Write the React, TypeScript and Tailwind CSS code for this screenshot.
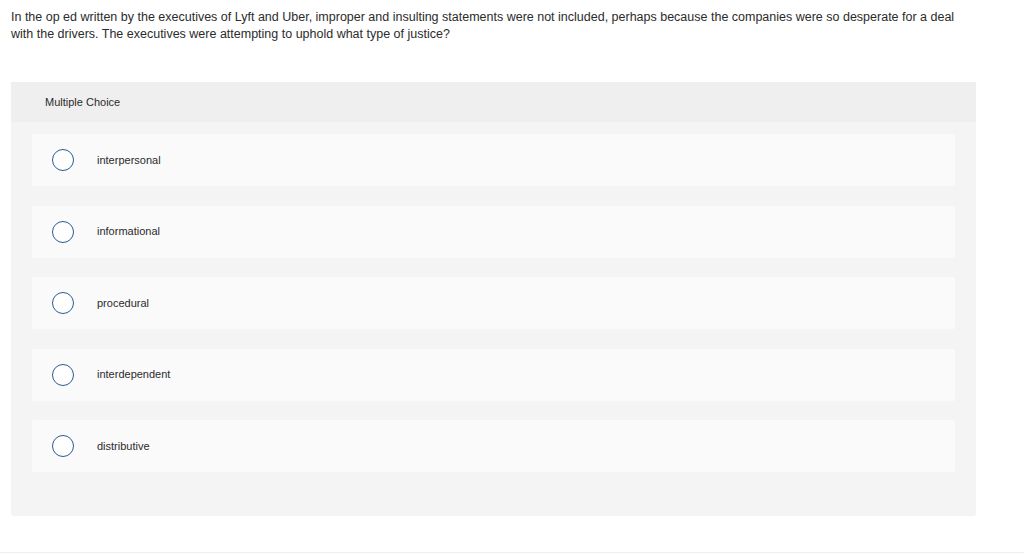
const OPTIONS = ["interpersonal", "informational", "procedural", "interdependent", "distributive"];

export default function App() {
  return (
    <div className="w-[1024px] h-[558px] bg-white font-['Liberation_Sans','Noto_Sans',sans-serif] flex flex-col">
      {/* Question */}
      <p className="pl-[11px] pt-[9px] w-[960px] text-[12.5px] leading-[17px] text-[#2b2b2b]">
        In the op ed written by the executives of Lyft and Uber, improper and insulting statements were not included, perhaps because the companies were so desperate for a deal with the drivers. The executives were attempting to uphold what type of justice?
      </p>

      {/* Answer panel */}
      <div className="mt-[39px] ml-[11px] w-[965px] h-[434px] bg-[#f4f4f4] rounded-[3px] flex flex-col">
        <div className="h-[40px] bg-[#efefef] flex items-center pl-[34px] pt-[1px] text-[11px] text-[#2b2b2b]">
          Multiple Choice
        </div>
        <div className="flex flex-col gap-[19.5px] pt-[12px] px-[21px]">
          {OPTIONS.map((opt) => (
            <div key={opt} className="h-[52px] bg-[#fafafa] rounded-[2px] flex items-center pl-[20px]">
              <span className="w-[22px] h-[22px] rounded-full border border-[#2d5a94] bg-white shrink-0" />
              <span className="ml-[23px] text-[11px] text-[#2b2b2b]">{opt}</span>
            </div>
          ))}
        </div>
      </div>

      <div className="mt-auto mb-[5px] h-px bg-[#eeeeee]" />
    </div>
  );
}
